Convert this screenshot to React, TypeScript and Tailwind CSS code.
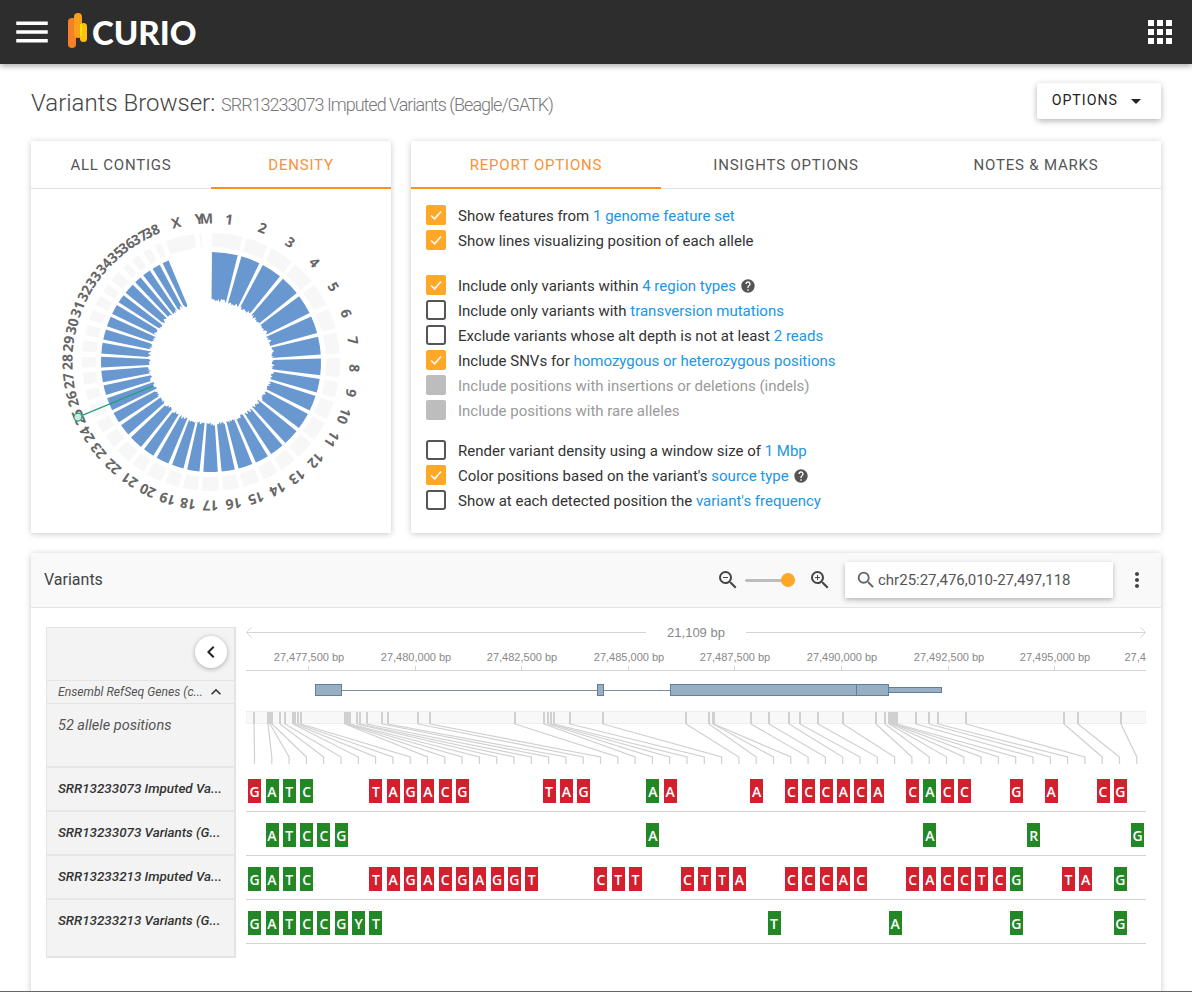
import React from "react";
import {
  MdApps,
  MdArrowDropDown,
  MdChevronLeft,
  MdExpandLess,
  MdHelp,
  MdMenu,
  MdMoreVert,
  MdSearch,
  MdZoomIn,
  MdZoomOut,
} from "react-icons/md";

const CARD = "bg-white rounded-[2px] shadow-[0_1px_6px_rgba(0,0,0,0.22)]";

// contig sizes in Mb, drives the circular plot
const CONTIGS: [string, number][] = [
  ["1", 115], ["2", 85], ["3", 91], ["4", 88], ["5", 88], ["6", 77], ["7", 80], ["8", 74],
  ["9", 61], ["10", 69], ["11", 74], ["12", 72], ["13", 63], ["14", 60], ["15", 64],
  ["16", 59], ["17", 64], ["18", 55], ["19", 53], ["20", 58], ["21", 50], ["22", 61],
  ["23", 52], ["24", 47], ["25", 51], ["26", 38], ["27", 45], ["28", 41], ["29", 41],
  ["30", 40], ["31", 39], ["32", 38], ["33", 31], ["34", 42], ["35", 26], ["36", 30],
  ["37", 30], ["38", 23], ["X", 110], ["Y", 7], ["M", 1],
];

const CX = 211;
const CY = 362;

function polar(r: number, deg: number) {
  const a = ((deg - 90) * Math.PI) / 180;
  return `${(CX + r * Math.cos(a)).toFixed(2)} ${(CY + r * Math.sin(a)).toFixed(2)}`;
}

function segment(r1: number, r2: number, a1: number, a2: number) {
  return `M${polar(r2, a1)}A${r2} ${r2} 0 0 1 ${polar(r2, a2)}L${polar(r1, a2)}A${r1} ${r1} 0 0 0 ${polar(r1, a1)}Z`;
}

function bar(a1: number, a2: number, seed: number) {
  const pts: string[] = [];
  const steps = Math.max(3, Math.round((a2 - a1) / 0.8));
  for (let i = steps; i >= 0; i--) {
    const a = a1 + ((a2 - a1) * i) / steps;
    const noise = Math.sin(seed * 12.9 + i * 78.2) * 43758.5;
    const r = 60 + (noise - Math.floor(noise)) * 4;
    pts.push(`L${polar(r, a)}`);
  }
  return `M${polar(110, a1)}A110 110 0 0 1 ${polar(110, a2)}${pts.join("")}Z`;
}

function Density() {
  let angle = 0.5;
  const items = CONTIGS.map(([name, size], i) => {
    const start = angle;
    const end = start + size * 0.118;
    angle = end + (i < 24 ? 2 : 2.45);
    return { name, start, end, mid: (start + end) / 2, i };
  });
  const green = (247.5 * Math.PI) / 180;
  const gx = (r: number) => CX + r * Math.sin(green);
  const gy = (r: number) => CY - r * Math.cos(green);
  return (
    <svg viewBox="31 189 360 344" className="w-[360px] h-[344px]">
      {items.map((c) => (
        <path key={"r" + c.name} d={segment(115, 129, c.start, c.end)} fill="#f7f7f7" />
      ))}
      {items
        .filter((c) => c.i < 38)
        .map((c) => {
          const pad = c.i >= 24 ? 0.35 : 0;
          return <path key={"b" + c.name} d={bar(c.start - pad, c.end + pad, c.i + 1)} fill="#6898cf" />;
        })}
      {items.map((c) => (
        <text
          key={"t" + c.name}
          x={CX}
          y={CY - 144}
          transform={`rotate(${c.mid} ${CX} ${CY})`}
          textAnchor="middle"
          dominantBaseline="central"
          fill="#666"
          fontSize="14"
          fontWeight="700"
          fontFamily="'Open Sans', sans-serif"
        >
          {c.name}
        </text>
      ))}
      <line x1={gx(62)} y1={gy(62)} x2={gx(144)} y2={gy(144)} stroke="#1f9e78" strokeWidth="1.2" />
      <circle cx={gx(144)} cy={gy(144)} r="4" fill="#c9e8de" stroke="#1f9e78" strokeWidth="1.2" />
    </svg>
  );
}

type Option = {
  text: string;
  link?: string;
  checked?: boolean;
  disabled?: boolean;
  help?: boolean;
};

const OPTION_GROUPS: { cls: string; rows: Option[] }[] = [
  {
    cls: "",
    rows: [
      { text: "Show features from ", link: "1 genome feature set", checked: true },
      { text: "Show lines visualizing position of each allele", checked: true },
    ],
  },
  {
    cls: "mt-5",
    rows: [
      { text: "Include only variants within ", link: "4 region types", checked: true, help: true },
      { text: "Include only variants with ", link: "transversion mutations" },
      { text: "Exclude variants whose alt depth is not at least ", link: "2 reads" },
      { text: "Include SNVs for ", link: "homozygous or heterozygous positions", checked: true },
      { text: "Include positions with insertions or deletions (indels)", disabled: true },
      { text: "Include positions with rare alleles", disabled: true },
    ],
  },
  {
    cls: "mt-[15px]",
    rows: [
      { text: "Render variant density using a window size of ", link: "1 Mbp" },
      { text: "Color positions based on the variant's ", link: "source type", checked: true, help: true },
      { text: "Show at each detected position the ", link: "variant's frequency" },
    ],
  },
];

function OptionRow({ row }: { row: Option }) {
  return (
    <div className="flex items-center h-[25px]">
      {row.checked ? (
        <span className="w-5 h-5 rounded-[2px] bg-[#ffa726] flex items-center justify-center">
          <svg viewBox="0 0 20 20" className="w-5 h-5">
            <path d="M5 10.5 L8.6 13.8 L15 6.5" fill="none" stroke="#fff" strokeWidth="1.6" />
          </svg>
        </span>
      ) : row.disabled ? (
        <span className="w-5 h-5 rounded-[2px] bg-[#bdbdbd]" />
      ) : (
        <span className="w-5 h-5 rounded-[3px] border-2 border-[#555]" />
      )}
      <span className={"ml-3 text-[15px] mt-[3px] " + (row.disabled ? "text-[#9a9a9a]" : "text-[#333]")}>
        {row.text}
        {row.link && <span className="text-[#2196e3]">{row.link}</span>}
      </span>
      {row.help && <MdHelp className="ml-[4px] mt-[3px] text-[#555]" size={16} />}
    </div>
  );
}

function Tab({ label, active }: { label: string; active?: boolean }) {
  return (
    <div
      className={
        "h-12 pt-[2px] flex items-center justify-center text-[15px] tracking-[0.8px] border-b-2 " +
        (active ? "text-[#f7923a] border-[#ff8f1c]" : "text-[#555] border-transparent")
      }
    >
      {label}
    </div>
  );
}

const BAND = [
  254, 268, 270, 272, 280, 285, 293, 295, 298, 301, 345, 346.5, 348, 350, 357, 360, 367, 382, 388,
  418, 430, 515, 544, 548, 551, 554, 570, 603, 686, 709, 713, 714, 751, 769, 789, 800, 818, 843, 876,
  885, 889, 891, 893, 895, 897, 916, 929, 938, 966, 1064, 1078, 1121,
];
const TICKS = [308, 415, 521, 628, 734, 841, 948, 1054];

function col(i: number) {
  return 254.5 + 17.3 * i;
}

function TrackChart() {
  const labels = [477500, 480000, 482500, 485000, 487500, 490000, 492500, 495000];
  return (
    <svg viewBox="246 620 900 147" className="w-[900px] h-[147px] block -mt-[7px]">
      <g stroke="#d4d4d4" fill="none">
        <path d="M246.5 632.5H646M746 632.5H1145.5" />
        <path d="M251.5 627.5L246.5 632.5L251.5 637.5M1140.5 627.5L1145.5 632.5L1140.5 637.5" />
        <path d="M246 670.5H1146" />
        {TICKS.map((x) => (
          <path key={x} d={`M${x + 0.5} 666V670`} />
        ))}
      </g>
      <text x="696" y="637" textAnchor="middle" fontSize="13" fill="#888" fontFamily="'Liberation Sans', sans-serif">
        21,109 bp
      </text>
      {TICKS.map((x, i) => (
        <text
          key={x}
          x={x + 1}
          y="661"
          textAnchor="middle"
          fontSize="11"
          fill="#888"
          fontFamily="'Liberation Sans', sans-serif"
        >
          27,{labels[i].toLocaleString("en-US")} bp
        </text>
      ))}
      <text x="1124.5" y="661" fontSize="11" fill="#888" fontFamily="'Liberation Sans', sans-serif">
        27,4
      </text>

      {/* gene model */}
      <path d="M342 690.5H597M604 690.5H670" fill="none" stroke="#7f8c99" />
      <g fill="#98aec3" stroke="#5f7f9e">
        <rect x="315.5" y="684.5" width="26" height="11" />
        <rect x="597.5" y="684.5" width="6" height="11" />
        <rect x="670.5" y="684.5" width="186" height="11" />
        <rect x="856.5" y="684.5" width="32" height="11" />
        <rect x="888.5" y="687.5" width="53" height="5" />
      </g>

      {/* allele position band and connectors */}
      <rect x="246" y="711.5" width="900" height="12" fill="#f8f8f8" stroke="#eeeeee" />
      {BAND.map((x, i) => (
        <g key={i} fill="none" stroke="#d0d0d0">
          <path d={`M${x} 712V724`} strokeWidth="2" />
          <path d={`M${x} 724L${col(i)} 757V764`} strokeWidth="1.2" />
        </g>
      ))}
    </svg>
  );
}

type Letter = [number, string, "r" | "g"];

const ROWS: { label: string; letters: Letter[] }[] = [
  {
    label: "SRR13233073 Imputed Va...",
    letters: [
      [0, "G", "r"], [1, "A", "g"], [2, "T", "g"], [3, "C", "g"],
      [7, "T", "r"], [8, "A", "r"], [9, "G", "r"], [10, "A", "r"], [11, "C", "r"], [12, "G", "r"],
      [17, "T", "r"], [18, "A", "r"], [19, "G", "r"], [23, "A", "g"], [24, "A", "r"], [29, "A", "r"],
      [31, "C", "r"], [32, "C", "r"], [33, "C", "r"], [34, "A", "r"], [35, "C", "r"], [36, "A", "r"],
      [38, "C", "r"], [39, "A", "g"], [40, "C", "r"], [41, "C", "r"],
      [44, "G", "r"], [46, "A", "r"], [49, "C", "r"], [50, "G", "r"],
    ],
  },
  {
    label: "SRR13233073 Variants (G...",
    letters: [
      [1, "A", "g"], [2, "T", "g"], [3, "C", "g"], [4, "C", "g"], [5, "G", "g"],
      [23, "A", "g"], [39, "A", "g"], [45, "R", "g"], [51, "G", "g"],
    ],
  },
  {
    label: "SRR13233213 Imputed Va...",
    letters: [
      [0, "G", "g"], [1, "A", "g"], [2, "T", "g"], [3, "C", "g"],
      [7, "T", "r"], [8, "A", "r"], [9, "G", "r"], [10, "A", "r"], [11, "C", "r"], [12, "G", "r"],
      [13, "A", "r"], [14, "G", "r"], [15, "G", "r"], [16, "T", "r"],
      [20, "C", "r"], [21, "T", "r"], [22, "T", "r"],
      [25, "C", "r"], [26, "T", "r"], [27, "T", "r"], [28, "A", "r"],
      [31, "C", "r"], [32, "C", "r"], [33, "C", "r"], [34, "A", "r"], [35, "C", "r"],
      [38, "C", "r"], [39, "A", "r"], [40, "C", "r"], [41, "C", "r"], [42, "T", "r"], [43, "C", "r"],
      [44, "G", "g"], [47, "T", "r"], [48, "A", "r"], [50, "G", "g"],
    ],
  },
  {
    label: "SRR13233213 Variants (G...",
    letters: [
      [0, "G", "g"], [1, "A", "g"], [2, "T", "g"], [3, "C", "g"], [4, "C", "g"], [5, "G", "g"],
      [6, "Y", "g"], [7, "T", "g"], [30, "T", "g"], [37, "A", "g"], [44, "G", "g"], [50, "G", "g"],
    ],
  },
];

function VariantsBrowser() {
  return (
    <div className="mx-[15px] mt-[19px] flex">
      <div className="w-[190px] h-[331px] bg-[#f3f3f3] border-2 border-[#e4e4e4] border-t border-l flex flex-col">
        <div className="h-[52px] flex justify-end pt-2 pr-[7px] shrink-0">
          <span className="w-8 h-8 rounded-full bg-white shadow-[0_1px_5px_rgba(0,0,0,0.3)] flex items-center justify-center text-[#222]">
            <MdChevronLeft size={24} />
          </span>
        </div>
        <div className="h-[24px] shrink-0 border-y border-[#e4e4e4] flex items-center pl-[11px] pr-2 justify-between text-[12.2px] italic text-[#555]">
          <span>Ensembl RefSeq Genes (c...</span>
          <MdExpandLess size={20} className="text-[#333]" />
        </div>
        <div className="h-[64px] shrink-0 pl-[11px] pt-[11px] italic text-[14.5px] text-[#555] border-b-2 border-[#e6e6e6]">
          52 allele positions
        </div>
        {ROWS.map((r, i) => (
          <div
            key={r.label}
            className={
              "h-[44px] shrink-0 pl-[11px] pt-[11px] italic font-medium text-[13.4px] text-[#333] " +
              (i < 3 ? "border-b-2 border-[#e6e6e6]" : "")
            }
          >
            {r.label}
          </div>
        ))}
      </div>
      <div className="ml-[10px] w-[900px]">
        <TrackChart />
        <div className="mt-[1px]">
          {ROWS.map((r) => (
            <div
              key={r.label}
              className="h-[44px] border-b-[1.5px] border-[#d4d4d4] pt-[11px] grid grid-cols-[repeat(52,17.32px)] pl-[2.2px] content-start"
            >
              {r.letters.map(([c, ch, kind]) => (
                <span
                  key={c}
                  style={{ gridColumnStart: c + 1 }}
                  className={
                    "w-[13px] h-6 flex items-center justify-center text-white text-[14px] font-semibold font-['Open_Sans'] " +
                    (kind === "r" ? "bg-[#d2202f]" : "bg-[#228725]")
                  }
                >
                  {ch}
                </span>
              ))}
            </div>
          ))}
        </div>
      </div>
    </div>
  );
}

export default function App() {
  return (
    <div className="w-[1192px] h-[992px] overflow-hidden bg-white font-['Roboto'] border-b border-[#666]">
      <header className="relative h-16 bg-[#2d2d2d] shadow-[0_2px_6px_rgba(0,0,0,0.35)] flex items-center justify-between pl-[11px] pr-[14px] text-white">
        <div className="flex items-center">
          <MdMenu size={42} />
          <svg viewBox="0 0 24 40" className="w-6 h-10 ml-[11px]">
            <rect x="4" y="6" width="8" height="30" rx="4" fill="#f58025" />
            <rect x="10" y="1" width="8" height="25" rx="4" fill="#f9a01b" />
            <rect x="16" y="11" width="7" height="19" rx="3.5" fill="#fdc010" />
            <rect x="16" y="12" width="2" height="12" fill="#ffe000" />
          </svg>
          <span className="ml-1 text-[33px] leading-none font-['Lato'] font-black">CURIO</span>
        </div>
        <MdApps size={36} />
      </header>

      <div className="px-[31px]">
        <div className="h-[77px] flex items-center justify-between">
          <h1 className="font-light text-[24px] text-[#444]">
            Variants Browser: <span className="text-[18px] text-[#777] tracking-[-1px]">SRR13233073 Imputed Variants (Beagle/GATK)</span>
          </h1>
          <button className="w-[124px] h-9 mb-1 pt-[1px] rounded-[2px] bg-white shadow-[0_2px_6px_rgba(0,0,0,0.3)] flex items-center justify-end text-[14.2px] tracking-[1px] text-[#222]">
            OPTIONS
            <MdArrowDropDown size={24} className="ml-[6px] mr-[13px]" />
          </button>
        </div>

        <div className="flex gap-5">
          <section className={CARD + " w-[360px] h-[392px]"}>
            <div className="grid grid-cols-2 border-b border-[#e0e0e0] h-12">
              <Tab label="ALL CONTIGS" />
              <Tab label="DENSITY" active />
            </div>
            <Density />
          </section>

          <section className={CARD + " w-[750px] h-[392px]"}>
            <div className="grid grid-cols-3 border-b border-[#e0e0e0] h-12">
              <Tab label="REPORT OPTIONS" active />
              <Tab label="INSIGHTS OPTIONS" />
              <Tab label="NOTES & MARKS" />
            </div>
            <div className="pl-[15px] pt-[13px]">
              {OPTION_GROUPS.map((g, i) => (
                <div key={i} className={g.cls}>
                  {g.rows.map((r) => (
                    <OptionRow key={r.text} row={r} />
                  ))}
                </div>
              ))}
            </div>
          </section>
        </div>

        <section className={CARD + " mt-5 h-[460px]"}>
          <div className="h-[55px] bg-[#f9f9f9] border-b border-[#e4e4e4] flex items-center pl-[13px] pr-[12px]">
            <span className="text-base text-[#444]">Variants</span>
            <div className="ml-auto flex items-center text-[#444]">
              <MdZoomOut size={24} />
              <span className="relative w-[50px] h-[3px] ml-[5px] bg-[#bdbdbd] rounded-full">
                <span className="absolute right-0 -top-[6px] w-[14px] h-[14px] rounded-full bg-[#ffa726]" />
              </span>
              <MdZoomIn size={24} className="ml-[13px]" />
              <div className="ml-[13px] w-[268px] h-9 bg-white shadow-[0_2px_5px_rgba(0,0,0,0.28)] flex items-center pl-[10px] text-[15px] text-[#555]">
                <MdSearch size={22} className="text-[#666]" />
                <span className="ml-[1px]">chr25:27,476,010-27,497,118</span>
              </div>
              <MdMoreVert size={24} className="ml-3 text-[#444]" />
            </div>
          </div>
          <VariantsBrowser />
        </section>
      </div>
    </div>
  );
}
